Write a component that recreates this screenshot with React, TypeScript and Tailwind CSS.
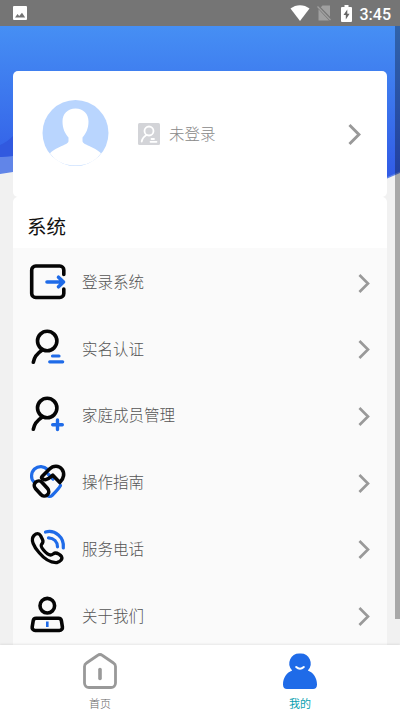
import type { ReactNode } from "react";

interface MenuItem {
  label: string;
  icon: ReactNode;
}

const BLUE = "#1f6be8";

function StrokeIcon({ children }: { children: ReactNode }) {
  return (
    <svg
      viewBox="0 0 40 40"
      className="h-10 w-10 shrink-0"
      fill="none"
      stroke="#050505"
      strokeWidth="3.6"
      strokeLinecap="round"
      strokeLinejoin="round"
    >
      {children}
    </svg>
  );
}

const menuItems: MenuItem[] = [
  {
    label: "登录系统",
    icon: (
      <StrokeIcon>
        <path d="M35.800 12.500V8a4 4 0 0 0-4-4H7.700a4 4 0 0 0-4 4v23.500a4 4 0 0 0 4 4h24.100a4 4 0 0 0 4-4V27" />
        <path d="M19 20h16.500M30.500 15.200l5 4.800-5 4.800" stroke={BLUE} />
      </StrokeIcon>
    ),
  },
  {
    label: "实名认证",
    icon: (
      <StrokeIcon>
        <circle cx="19.200" cy="13" r="9.700" />
        <path d="M14 22.300C9 25.500 6.300 29 5.300 34.300" />
        <path d="M24.500 28h6.500M21.700 33.800h13" stroke={BLUE} strokeWidth="3.200" />
      </StrokeIcon>
    ),
  },
  {
    label: "家庭成员管理",
    icon: (
      <StrokeIcon>
        <circle cx="19.200" cy="13" r="9.700" />
        <path d="M14 22.300C9 25.500 6.300 29 5.300 34.300" />
        <path d="M29.500 24.900v9.600M24.700 29.700h9.600" stroke={BLUE} strokeWidth="3.400" />
      </StrokeIcon>
    ),
  },
  {
    label: "操作指南",
    icon: (
      <StrokeIcon>
        <path
          d="M6 20C2.500 17 2.800 10.500 6.500 7 10.500 3.500 16 4 19.500 7.500M20 12l5 5M32.500 23.500c-1 2-7 8.500-8.500 10-1.500 1.300-3.500 1-4.500 0"
          stroke={BLUE}
          strokeWidth="3.200"
        />
        <path
          d="M14 14.500 21.500 7c4-4 9.500-3.500 12.300 0 3 4 2.300 9.500-2 13.500l-7-7.300c-2.500 2-4.300 4-7.300 4.500-2.500.3-4.700-1.700-3.500-3.200Z"
        />
        <rect x="4.900" y="22" width="17.200" height="9" rx="4.500" transform="rotate(48 13.500 26.500)" />
      </StrokeIcon>
    ),
  },
  {
    label: "服务电话",
    icon: (
      <StrokeIcon>
        <path
          d="M6 7.500c2.500-2.500 5-2.500 6.500 0l2 4c1 2 .5 3.500-1 5-1 1.500 0 3 2 5.500 2.500 3 5 5 7 5 2 .2 3-2 5-2 2 0 5 2 6 3.500 1.500 2.500-1.500 5.500-4.500 6-6 .5-13-4-18-10C6 19 2 11.500 6 7.500Z"
          strokeWidth="3.300"
        />
        <path d="M17.500 4C27 1.500 36.500 9 35.300 20M20.500 9.800c5.500.2 9 4 9 9" stroke={BLUE} strokeWidth="3.200" />
      </StrokeIcon>
    ),
  },
  {
    label: "关于我们",
    icon: (
      <StrokeIcon>
        <circle cx="19.300" cy="10.700" r="7.300" />
        <path d="M8.200 23.200h22.200a3 3 0 0 1 3 2.500l1 6.300a3 3 0 0 1-3 3.500H7.200a3 3 0 0 1-3-3.500l1-6.300a3 3 0 0 1 3-2.500Z" />
        <path d="M19.300 26.500v5.500" stroke={BLUE} strokeWidth="2.600" strokeLinecap="butt" />
      </StrokeIcon>
    ),
  },
];

function Chevron({ className }: { className: string }) {
  return (
    <svg viewBox="0 0 12 20" className={className} fill="none" stroke="#999" strokeWidth="2.800">
      <path d="M1.200 1l9 9-9 9" />
    </svg>
  );
}

function StatusBar() {
  return (
    <header className="flex h-[26px] shrink-0 items-center bg-[#757575] pr-[9px] pl-[13px] text-white">
      <svg viewBox="0 0 14 14" className="h-[14px] w-[14px]">
        <rect width="14" height="14" rx="1" fill="#fff" />
        <path d="M2 11.500 4.500 8l1.700 2L9 6.800l3.200 4.700Z" fill="#757575" />
      </svg>
      <svg viewBox="0 0 20 16" className="ml-auto h-4 w-5">
        <path d="M.5 3.500C6-1 14-1 19.500 3.500L10 16Z" fill="#fff" />
      </svg>
      <svg viewBox="0 0 14 16" className="ml-[7px] h-4 w-[14px]">
        <path d="M5.500.5H13v11.300L3.800 2.200ZM1.500 4.200 12 15.500H1.500Z" fill="#a0a0a0" />
        <path d="M.5 1.500 13.500 15" stroke="#a0a0a0" strokeWidth="1.300" />
      </svg>
      <svg viewBox="0 0 11 17" className="ml-[10px] h-[17px] w-[11px]">
        <path d="M3.500 0h4v2H10a1 1 0 0 1 1 1v13a1 1 0 0 1-1 1H1a1 1 0 0 1-1-1V3a1 1 0 0 1 1-1h2.500Z" fill="#fff" />
        <path d="M6.300 4.500 2.500 10h2.300v4.500L8.600 8.800H6.300Z" fill="#666" />
      </svg>
      <span className="ml-[8px] pt-[3px] font-[Roboto,sans-serif] text-[16px] leading-6 font-medium">3:45</span>
    </header>
  );
}

function HeroBackground() {
  return (
    <svg viewBox="0 0 400 160" className="col-start-1 row-start-1 h-[160px] w-[400px]">
      <defs>
        <linearGradient id="hero" x1="0" y1="0" x2="0" y2="1">
          <stop offset="0" stopColor="#468ff4" />
          <stop offset="1" stopColor="#315be6" />
        </linearGradient>
      </defs>
      <path d="M0 0h400v147l-14 6L13 146 0 148Z" fill="#6185e8" />
      <path d="M0 0h400v145.500l-14 6L13 130 0 131Z" fill="url(#hero)" />
      <path d="M0 119c5-2 9-5 13-9v20L0 131Z" fill="#3159df" />
    </svg>
  );
}

function ProfileCard() {
  return (
    <section className="flex h-[126px] items-center rounded-[5px] bg-white pr-[26px] pl-[29px]">
      <svg viewBox="0 0 68 68" className="mb-[2px] h-[68px] w-[68px]">
        <circle cx="33.500" cy="34" r="33" fill="#b9d5fe" />
        <path
          d="M33.500 9.500c8 0 13 5.500 13 13 0 7-2.500 12-6 16v3.500c0 4 12 5.500 18.500 12.300C53 63 44 66.500 33.500 66.500S14 63 8 54.300C14.500 47.500 26.500 46 26.500 42v-3.500c-3.500-4-6-9-6-16 0-7.500 5-13 13-13Z"
          fill="#fff"
        />
      </svg>
      <svg viewBox="0 0 22 22" className="ml-[28px] h-[22px] w-[22px]" fill="none" stroke="#fff" strokeWidth="1.800" strokeLinecap="round">
        <rect width="22" height="22" rx="1.500" fill="#d3d4d8" stroke="none" />
        <circle cx="11" cy="8" r="4.500" />
        <path d="M8.500 12c-2.800 1.700-4.300 3.500-4.800 6.500M13.500 16h2.500M12.500 18.800h6" />
      </svg>
      <span className="ml-[9px] text-[15.500px] font-light text-[#888]">未登录</span>
      <Chevron className="ml-auto h-[21px] w-[13px]" />
    </section>
  );
}

function SystemMenu() {
  return (
    <section className="rounded-t-[5px] bg-white">
      <h2 className="h-[51px] pl-[14px] text-[19.500px] leading-[58px] text-[#111]">系统</h2>
      <ul className="bg-[#fafafa] pt-[0.400px]">
        {menuItems.map((item) => (
          <li key={item.label} className="flex h-[66.700px] items-center pr-[17px] pl-[15px]">
            {item.icon}
            <span className="ml-[14px] text-[15.500px] font-light text-[#555]">{item.label}</span>
            <Chevron className="mt-[3px] ml-auto h-[19px] w-[12px]" />
          </li>
        ))}
      </ul>
    </section>
  );
}

function TabBar() {
  return (
    <nav className="z-10 grid h-[66px] shrink-0 grid-cols-2 bg-white text-[11px] leading-4 shadow-[0_-1px_2px_rgba(0,0,0,0.08)]">
      <div className="flex flex-col items-center pt-[7px] text-[#666]">
        <svg viewBox="0 0 40 40" className="h-10 w-10" fill="none" stroke="#999" strokeWidth="2.800" strokeLinejoin="round">
          <path d="M17.500 3.500a4 4 0 0 1 5 0L33.500 11a4 4 0 0 1 2 3.500V31a4.500 4.500 0 0 1-4.500 4.500H9A4.500 4.500 0 0 1 4.500 31V14.500a4 4 0 0 1 2-3.500Z" />
          <path d="M20 17.500v9" strokeWidth="3.600" strokeLinecap="round" />
        </svg>
        <span className="mt-[3px] font-light">首页</span>
      </div>
      <div className="flex flex-col items-center pt-[7px] text-[#0a9fb0]">
        <svg viewBox="0 0 40 40" className="h-10 w-10">
          <path
            d="M20 1.500a10 10 0 0 1 7.800 17c5.500 2 9.200 7.500 9.200 14 0 3-1.500 4.500-4 4.500H7c-2.500 0-4-1.500-4-4.500 0-6.500 3.700-12 9.200-14A10 10 0 0 1 20 1.500Z"
            fill="#1f6be8"
          />
          <path d="M16.200 15q3.800 3.600 7.600 0" fill="none" stroke="#fff" strokeWidth="2" strokeLinecap="round" />
        </svg>
        <span className="mt-[3px]">我的</span>
      </div>
    </nav>
  );
}

export default function App() {
  return (
    <div className="relative flex h-[711px] w-[400px] flex-col overflow-hidden bg-[#f1f1f1] font-['Noto_Sans_CJK_SC',sans-serif]">
      <StatusBar />
      <main className="grid min-h-0 flex-1 grid-cols-[400px] items-start overflow-hidden">
        <HeroBackground />
        <div className="col-start-1 row-start-1 mr-[13.500px] ml-[13px] pt-[45px]">
          <ProfileCard />
          <SystemMenu />
        </div>
      </main>
      <TabBar />
      <div className="absolute top-[26px] right-0 h-[593px] w-[5px] bg-black/30" />
    </div>
  );
}
